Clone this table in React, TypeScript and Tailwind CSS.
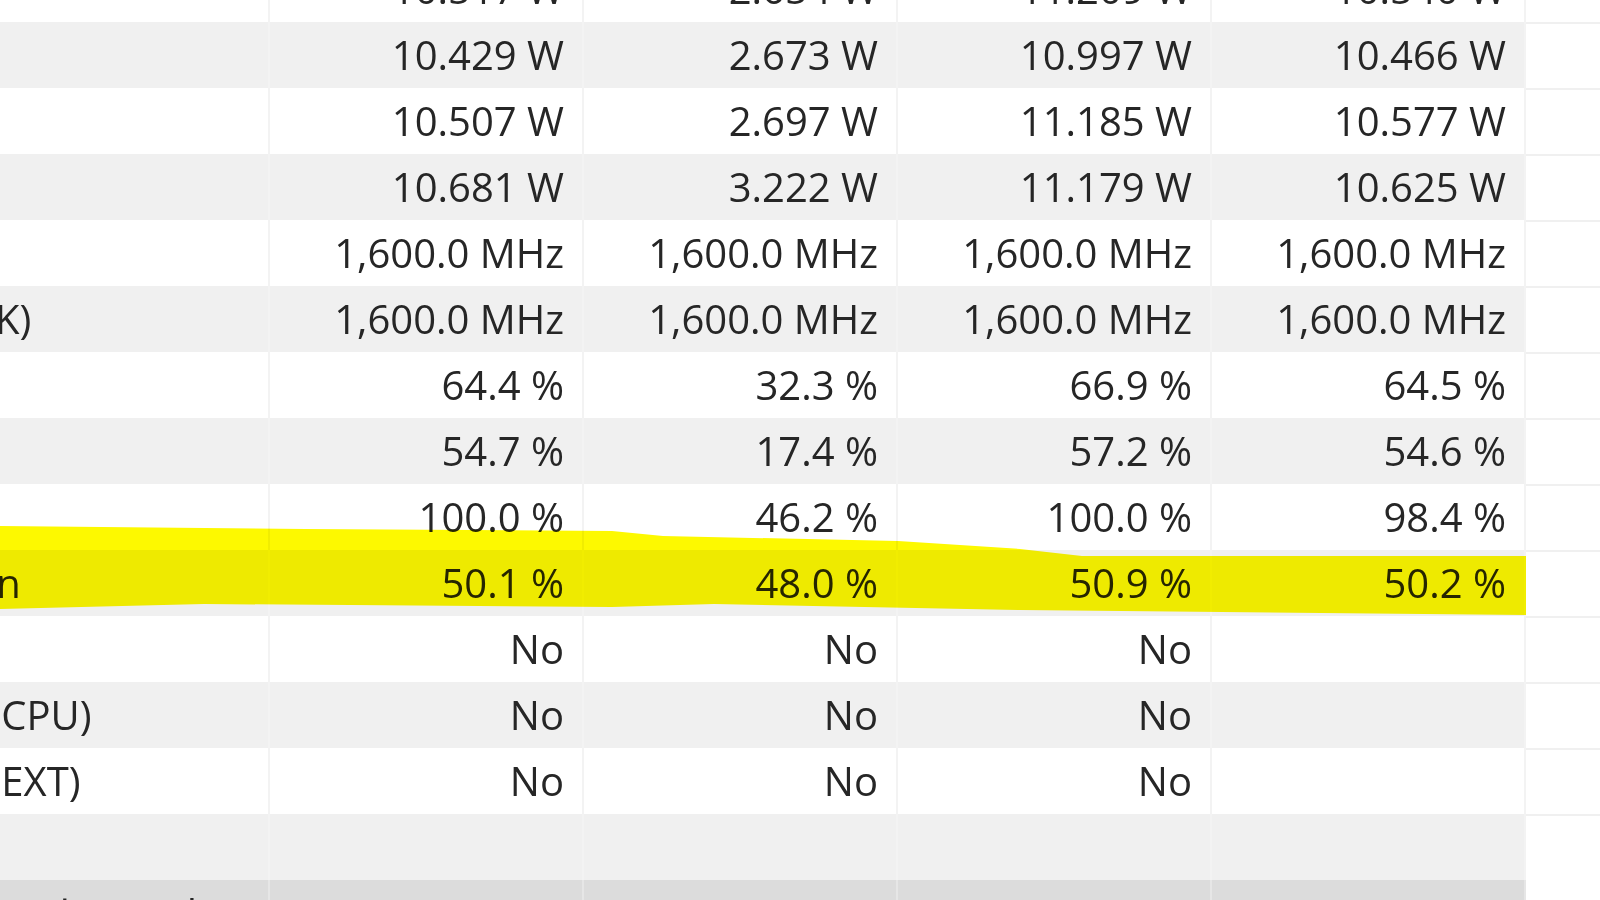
type Row = {
  label: string
  values: string[]
}

const ROWS: Row[] = [
  { label: 'Core 1 Power', values: ['10.517 W', '2.654 W', '11.209 W', '10.540 W'] },
  { label: 'Core 2 Power', values: ['10.429 W', '2.673 W', '10.997 W', '10.466 W'] },
  { label: 'Core 3 Power', values: ['10.507 W', '2.697 W', '11.185 W', '10.577 W'] },
  { label: 'Core 4 Power', values: ['10.681 W', '3.222 W', '11.179 W', '10.625 W'] },
  { label: 'Infinity Fabric Clock (FCLK)', values: ['1,600.0 MHz', '1,600.0 MHz', '1,600.0 MHz', '1,600.0 MHz'] },
  { label: 'Memory Controller Clock (UCLK)', values: ['1,600.0 MHz', '1,600.0 MHz', '1,600.0 MHz', '1,600.0 MHz'] },
  { label: 'CPU PPT Limit', values: ['64.4 %', '32.3 %', '66.9 %', '64.5 %'] },
  { label: 'CPU TDC Limit', values: ['54.7 %', '17.4 %', '57.2 %', '54.6 %'] },
  { label: 'CPU EDC Limit', values: ['100.0 %', '46.2 %', '100.0 %', '98.4 %'] },
  { label: 'CPU Power Reporting Deviation', values: ['50.1 %', '48.0 %', '50.9 %', '50.2 %'] },
  { label: 'Thermal Throttling (HTC)', values: ['No', 'No', 'No', ''] },
  { label: 'Thermal Throttling (PROCHOT CPU)', values: ['No', 'No', 'No', ''] },
  { label: 'Thermal Throttling (PROCHOT EXT)', values: ['No', 'No', 'No', ''] },
  { label: '', values: ['', '', '', ''] },
]

function SensorRow({ row, index }: { row: Row; index: number }) {
  const bg = index % 2 === 0 ? 'bg-white' : 'bg-[#f0f0f0]'
  return (
    <div className="flex h-[66px] shrink-0">
      <div className={`flex w-[840px] shrink-0 items-center whitespace-nowrap border-r-2 border-[#f3f3f3] pl-1 ${bg}`}>
        {row.label}
      </div>
      {row.values.map((v, i) => (
        <div
          key={i}
          className={`flex w-[314px] shrink-0 items-center justify-end border-r-2 border-[#f3f3f3] pr-[18px] ${bg}`}
        >
          {v}
        </div>
      ))}
      <div className="flex-1 border-t-2 border-[#f0f0f0] bg-white" />
    </div>
  )
}

export default function App() {
  return (
    <div className="relative h-[900px] w-[1600px] overflow-hidden bg-white font-['Open_Sans',sans-serif] text-[40px] leading-none font-medium text-[#262626]">
      <div className="-mt-[44px] -ml-[570px] flex flex-col">
        {ROWS.map((row, i) => (
          <SensorRow key={i} row={row} index={i} />
        ))}

        {/* group header, mostly below the fold */}
        <div className="flex h-[66px] shrink-0">
          <div className="w-[840px] shrink-0 whitespace-nowrap border-r-2 border-[#e6e6e6] bg-[#dcdcdc] pt-[14px] pl-2">
            CPU [#0]: AMD Ryzen 7 3700X: Enhanced
          </div>
          <div className="w-[314px] shrink-0 border-r-2 border-[#e6e6e6] bg-[#dcdcdc]" />
          <div className="w-[314px] shrink-0 border-r-2 border-[#e6e6e6] bg-[#dcdcdc]" />
          <div className="w-[314px] shrink-0 border-r-2 border-[#e6e6e6] bg-[#dcdcdc]" />
          <div className="w-[314px] shrink-0 border-r-2 border-[#e6e6e6] bg-[#dcdcdc]" />
          <div className="flex-1 bg-white" />
        </div>
      </div>

      {/* marker highlight drawn over the screenshot */}
      <svg
        className="pointer-events-none absolute top-0 left-0 mix-blend-multiply"
        width="1600"
        height="900"
        viewBox="0 0 1600 900"
      >
        <polygon
          fill="#fdf900"
          points="0,526 306,529 612,531 663,536 898,541 1020,549 1082,556 1526,556 1526,615 1020,610 714,604 612,607 204,604 0,609"
        />
      </svg>
    </div>
  )
}
